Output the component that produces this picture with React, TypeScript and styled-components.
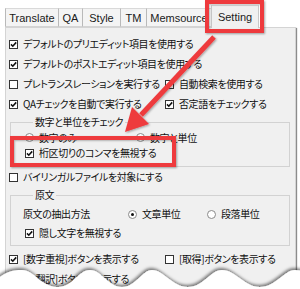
import styled, { createGlobalStyle } from "styled-components";

const GlobalStyle = createGlobalStyle`
  html, body {
    margin: 0;
    padding: 0;
    background: #ffffff;
  }
  body {
    width: 300px;
    height: 289px;
    overflow: hidden;
    font-family: "Noto Sans CJK JP", "Noto Sans", sans-serif;
    color: #111;
  }
`;

const Stage = styled.div`
  position: relative;
  width: 300px;
  height: 289px;
  overflow: hidden;
  box-sizing: border-box;
  padding: 5px 0 0 5px;
`;

const TabBar = styled.div`
  display: flex;
  align-items: flex-end;
  height: 22px;
  position: relative;
  z-index: 1;
`;

const Tab = styled.div<{ $w: number; $active?: boolean }>`
  width: ${(p) => p.$w}px;
  height: ${(p) => (p.$active ? 23 : 19)}px;
  margin-bottom: ${(p) => (p.$active ? -1 : 0)}px;
  box-sizing: border-box;
  display: flex;
  align-items: center;
  justify-content: center;
  font-family: "Liberation Sans", Arial, sans-serif;
  font-size: 11px;
  color: #1a1a1a;
  background: ${(p) => (p.$active ? "#f0f0f0" : "#f4f4f4")};
  border: 1px solid ${(p) => (p.$active ? "#c8c8c8" : "#b9b9b9")};
  border-top-color: #d9d9d9;
  border-bottom: ${(p) => (p.$active ? "none" : "1px solid #d4d4d4")};
  border-right: ${(p) => (p.$active ? "1px solid #c8c8c8" : "none")};
  padding-top: ${(p) => (p.$active ? 0 : 1)}px;
`;

const Panel = styled.div`
  width: 291px;
  height: 270px;
  box-sizing: border-box;
  background: #f0f0f0;
  border: 1px solid #d4d4d4;
  box-shadow: 2px 0 1px -1px #8c8c8c;
  padding: 6px 0 0 3px;
  font-size: 10px;
  line-height: 14px;
  letter-spacing: -0.4px;
  font-feature-settings: "palt";
`;

const Row = styled.div<{ $h?: number; $mt?: number }>`
  display: flex;
  align-items: center;
  height: ${(p) => p.$h ?? 20}px;
  margin-top: ${(p) => p.$mt ?? 0}px;
`;

const Col = styled.div<{ $w?: number }>`
  display: flex;
  align-items: center;
  width: ${(p) => (p.$w ? `${p.$w}px` : "auto")};
  flex: ${(p) => (p.$w ? "none" : "1")};
  white-space: nowrap;
`;

const Box = styled.span`
  width: 9px;
  height: 9px;
  box-sizing: border-box;
  border: 1px solid #333;
  background: #fff;
  margin-right: 5px;
  flex: none;
  display: flex;
  align-items: center;
  justify-content: center;
`;

const RadioDot = styled.span<{ $on?: boolean }>`
  width: 9px;
  height: 9px;
  box-sizing: border-box;
  border-radius: 50%;
  border: 1px solid #8a8a8a;
  background: #fff;
  margin-right: 5px;
  flex: none;
  display: flex;
  align-items: center;
  justify-content: center;
  &::after {
    content: "";
    width: 3px;
    height: 3px;
    border-radius: 50%;
    background: ${(p) => (p.$on ? "#111" : "transparent")};
  }
`;

const Group = styled.fieldset<{ $pb: number }>`
  margin: 1px 5px 0 1px;
  padding: 0 0 ${(p) => p.$pb}px 14px;
  border: 1px solid #d2d2d2;
  min-width: 0;
`;

const Legend = styled.legend`
  margin-left: 8px;
  padding: 0 2px;
  height: 14px;
  line-height: 14px;
  font-size: 10px;
`;

const Label = styled.span<{ $shift?: number }>`
  margin-left: ${(p) => p.$shift ?? 0}px;
`;

function Check({ on, label }: { on?: boolean; label: string }) {
  return (
    <>
      <Box>
        {on && (
          <svg width="7" height="7" viewBox="0 0 7 7">
            <path d="M1 3.4 L2.8 5.2 L6.2 1.4" stroke="#111" strokeWidth="1.6" fill="none" />
          </svg>
        )}
      </Box>
      <Label>{label}</Label>
    </>
  );
}

function Radio({ on, label }: { on?: boolean; label: string }) {
  return (
    <>
      <RadioDot $on={on} />
      <Label>{label}</Label>
    </>
  );
}

const Overlay = styled.div`
  position: absolute;
  inset: 0;
  pointer-events: none;
  z-index: 5;
`;

const RedBox = styled.div<{ $x: number; $y: number; $w: number; $h: number }>`
  position: absolute;
  left: ${(p) => p.$x}px;
  top: ${(p) => p.$y}px;
  width: ${(p) => p.$w}px;
  height: ${(p) => p.$h}px;
  box-sizing: border-box;
  border: 4px solid #ee3a3d;
  box-shadow: 1px 1px 2px rgba(0, 0, 0, 0.35), inset 1px 1px 2px rgba(0, 0, 0, 0.25);
`;

const Drawing = styled.svg`
  position: absolute;
  left: 0;
  top: 0;
`;

const tabs = [
  { name: "Translate", w: 53 },
  { name: "QA", w: 24 },
  { name: "Style", w: 38 },
  { name: "TM", w: 26 },
  { name: "Memsource", w: 65 },
];

export default function App() {
  return (
    <Stage>
      <GlobalStyle />
      <TabBar>
        {tabs.map((t) => (
          <Tab key={t.name} $w={t.w}>
            {t.name}
          </Tab>
        ))}
        <Tab $w={48} $active>
          Setting
        </Tab>
      </TabBar>
      <Panel>
        <Row>
          <Col>
            <Check on label="デフォルトのプリエディット項目を使用する" />
          </Col>
        </Row>
        <Row>
          <Col>
            <Check on label="デフォルトのポストエディット項目を使用する" />
          </Col>
        </Row>
        <Row>
          <Col $w={156}>
            <Check label="プレトランスレーションを実行する" />
          </Col>
          <Col>
            <Check label="自動検索を使用する" />
          </Col>
        </Row>
        <Row>
          <Col $w={156}>
            <Check on label="QAチェックを自動で実行する" />
          </Col>
          <Col>
            <Check on label="否定語をチェックする" />
          </Col>
        </Row>
        <Group $pb={5}>
          <Legend>数字と単位をチェック</Legend>
          <Row $h={15} $mt={1}>
            <Col $w={111}>
              <Radio label="数字のみ" />
            </Col>
            <Col>
              <Radio on label="数字と単位" />
            </Col>
          </Row>
          <Row $h={16}>
            <Col>
              <Check on label="桁区切りのコンマを無視する" />
            </Col>
          </Row>
        </Group>
        <Row>
          <Col>
            <Check label="バイリンガルファイルを対象にする" />
          </Col>
        </Row>
        <Group $pb={3}>
          <Legend>原文</Legend>
          <Row $mt={2}>
            <Col $w={103}>
              <Label $shift={-2}>原文の抽出方法</Label>
            </Col>
            <Col $w={79}>
              <Radio on label="文章単位" />
            </Col>
            <Col>
              <Radio label="段落単位" />
            </Col>
          </Row>
          <Row $h={18}>
            <Col>
              <Check on label="隠し文字を無視する" />
            </Col>
          </Row>
        </Group>
        <Row $mt={3}>
          <Col $w={156}>
            <Check on label="[数字重視]ボタンを表示する" />
          </Col>
          <Col>
            <Check label="[取得]ボタンを表示する" />
          </Col>
        </Row>
        <Row>
          <Col $w={156}>
            <Check label="[文翻訳]ボタンを表示する" />
          </Col>
        </Row>
      </Panel>

      <Overlay>
        <Drawing width="300" height="289" viewBox="0 0 300 289">
          <defs>
            <filter id="tornShadow" x="-10%" y="-60%" width="120%" height="180%">
              <feDropShadow dx="-1" dy="-2" stdDeviation="1.6" floodColor="#000" floodOpacity="0.5" />
            </filter>
            <filter id="arrowShadow" x="-20%" y="-20%" width="140%" height="140%">
              <feDropShadow dx="1" dy="1" stdDeviation="1" floodColor="#000" floodOpacity="0.35" />
            </filter>
          </defs>
          <g filter="url(#arrowShadow)">
            <line x1="214" y1="37" x2="141" y2="115" stroke="#ee3a3d" strokeWidth="5" />
            <polygon points="125,132 149,124 132,107" fill="#ee3a3d" />
          </g>
          <path
            filter="url(#tornShadow)"
            fill="#ffffff"
            d="M-4,280 C6,272 12,270 22,270 C34,270 40,286 57,287 C72,288 78,270 90,270 C102,270 108,287 122,287 C136,287 142,270 152,270 C164,270 172,287 188,287 C204,287 210,270 222,270 C236,270 244,287 260,287 C276,287 284,270 295,270 L304,271 L304,295 L-4,295 Z"
          />
        </Drawing>
        <RedBox $x={205} $y={0} $w={59} $h={33} />
        <RedBox $x={10} $y={136} $w={166} $h={31} />
      </Overlay>
    </Stage>
  );
}
